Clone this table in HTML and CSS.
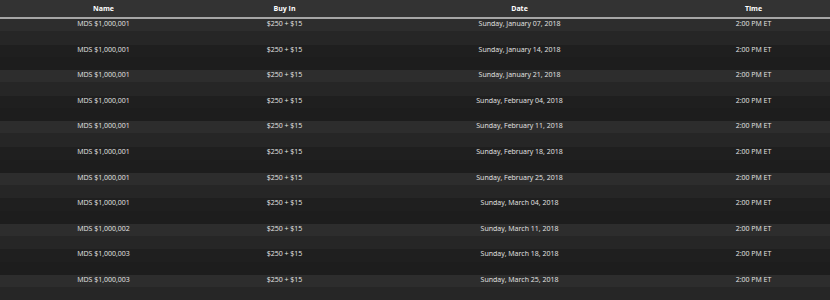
FILE: index.html
```html
<!DOCTYPE html>
<html>
<head>
<meta charset="utf-8">
<link rel="stylesheet" href="styles.css">
</head>
<body>
<div class="table">
  <div class="row head">
    <div class="cell">Name</div>
    <div class="cell">Buy In</div>
    <div class="cell">Date</div>
    <div class="cell">Time</div>
  </div>
  <div class="row odd"><div class="cell">MDS $1,000,001</div><div class="cell">$250 + $15</div><div class="cell">Sunday, January 07, 2018</div><div class="cell">2:00 PM ET</div></div>
  <div class="row even"><div class="cell">MDS $1,000,001</div><div class="cell">$250 + $15</div><div class="cell">Sunday, January 14, 2018</div><div class="cell">2:00 PM ET</div></div>
  <div class="row odd"><div class="cell">MDS $1,000,001</div><div class="cell">$250 + $15</div><div class="cell">Sunday, January 21, 2018</div><div class="cell">2:00 PM ET</div></div>
  <div class="row even"><div class="cell">MDS $1,000,001</div><div class="cell">$250 + $15</div><div class="cell">Sunday, February 04, 2018</div><div class="cell">2:00 PM ET</div></div>
  <div class="row odd"><div class="cell">MDS $1,000,001</div><div class="cell">$250 + $15</div><div class="cell">Sunday, February 11, 2018</div><div class="cell">2:00 PM ET</div></div>
  <div class="row even"><div class="cell">MDS $1,000,001</div><div class="cell">$250 + $15</div><div class="cell">Sunday, February 18, 2018</div><div class="cell">2:00 PM ET</div></div>
  <div class="row odd"><div class="cell">MDS $1,000,001</div><div class="cell">$250 + $15</div><div class="cell">Sunday, February 25, 2018</div><div class="cell">2:00 PM ET</div></div>
  <div class="row even"><div class="cell">MDS $1,000,001</div><div class="cell">$250 + $15</div><div class="cell">Sunday, March 04, 2018</div><div class="cell">2:00 PM ET</div></div>
  <div class="row odd"><div class="cell">MDS $1,000,002</div><div class="cell">$250 + $15</div><div class="cell">Sunday, March 11, 2018</div><div class="cell">2:00 PM ET</div></div>
  <div class="row even"><div class="cell">MDS $1,000,003</div><div class="cell">$250 + $15</div><div class="cell">Sunday, March 18, 2018</div><div class="cell">2:00 PM ET</div></div>
  <div class="row odd"><div class="cell">MDS $1,000,003</div><div class="cell">$250 + $15</div><div class="cell">Sunday, March 25, 2018</div><div class="cell">2:00 PM ET</div></div>
</div>
</body>
</html>
```
FILE: styles.css
```css
html, body {
  margin: 0;
  padding: 0;
  background: #1e1e1e;
  overflow: hidden;
}
body {
  font-family: "Open Sans", "DejaVu Sans", sans-serif;
  font-size: 7px;
  color: #e6e6e6;
}
.table {
  width: 830px;
}
.row {
  display: grid;
  grid-template-columns: 207px 155px 315px 153px;
  height: 25.6px;
}
.cell {
  text-align: center;
  line-height: 9px;
  white-space: nowrap;
}
.head {
  height: 17px;
  background: #333333;
  border-bottom: 2px solid #a6a6a6;
  color: #ffffff;
  font-weight: 700;
}
.head .cell {
  line-height: 17px;
}
.odd {
  background: linear-gradient(#2d2d2d 0, #2d2d2d 48%, #262626 48%, #262626 100%);
}
.even {
  background: linear-gradient(#1f1f1f 0, #1f1f1f 50%, #1d1d1d 50%, #1d1d1d 100%);
}
```
